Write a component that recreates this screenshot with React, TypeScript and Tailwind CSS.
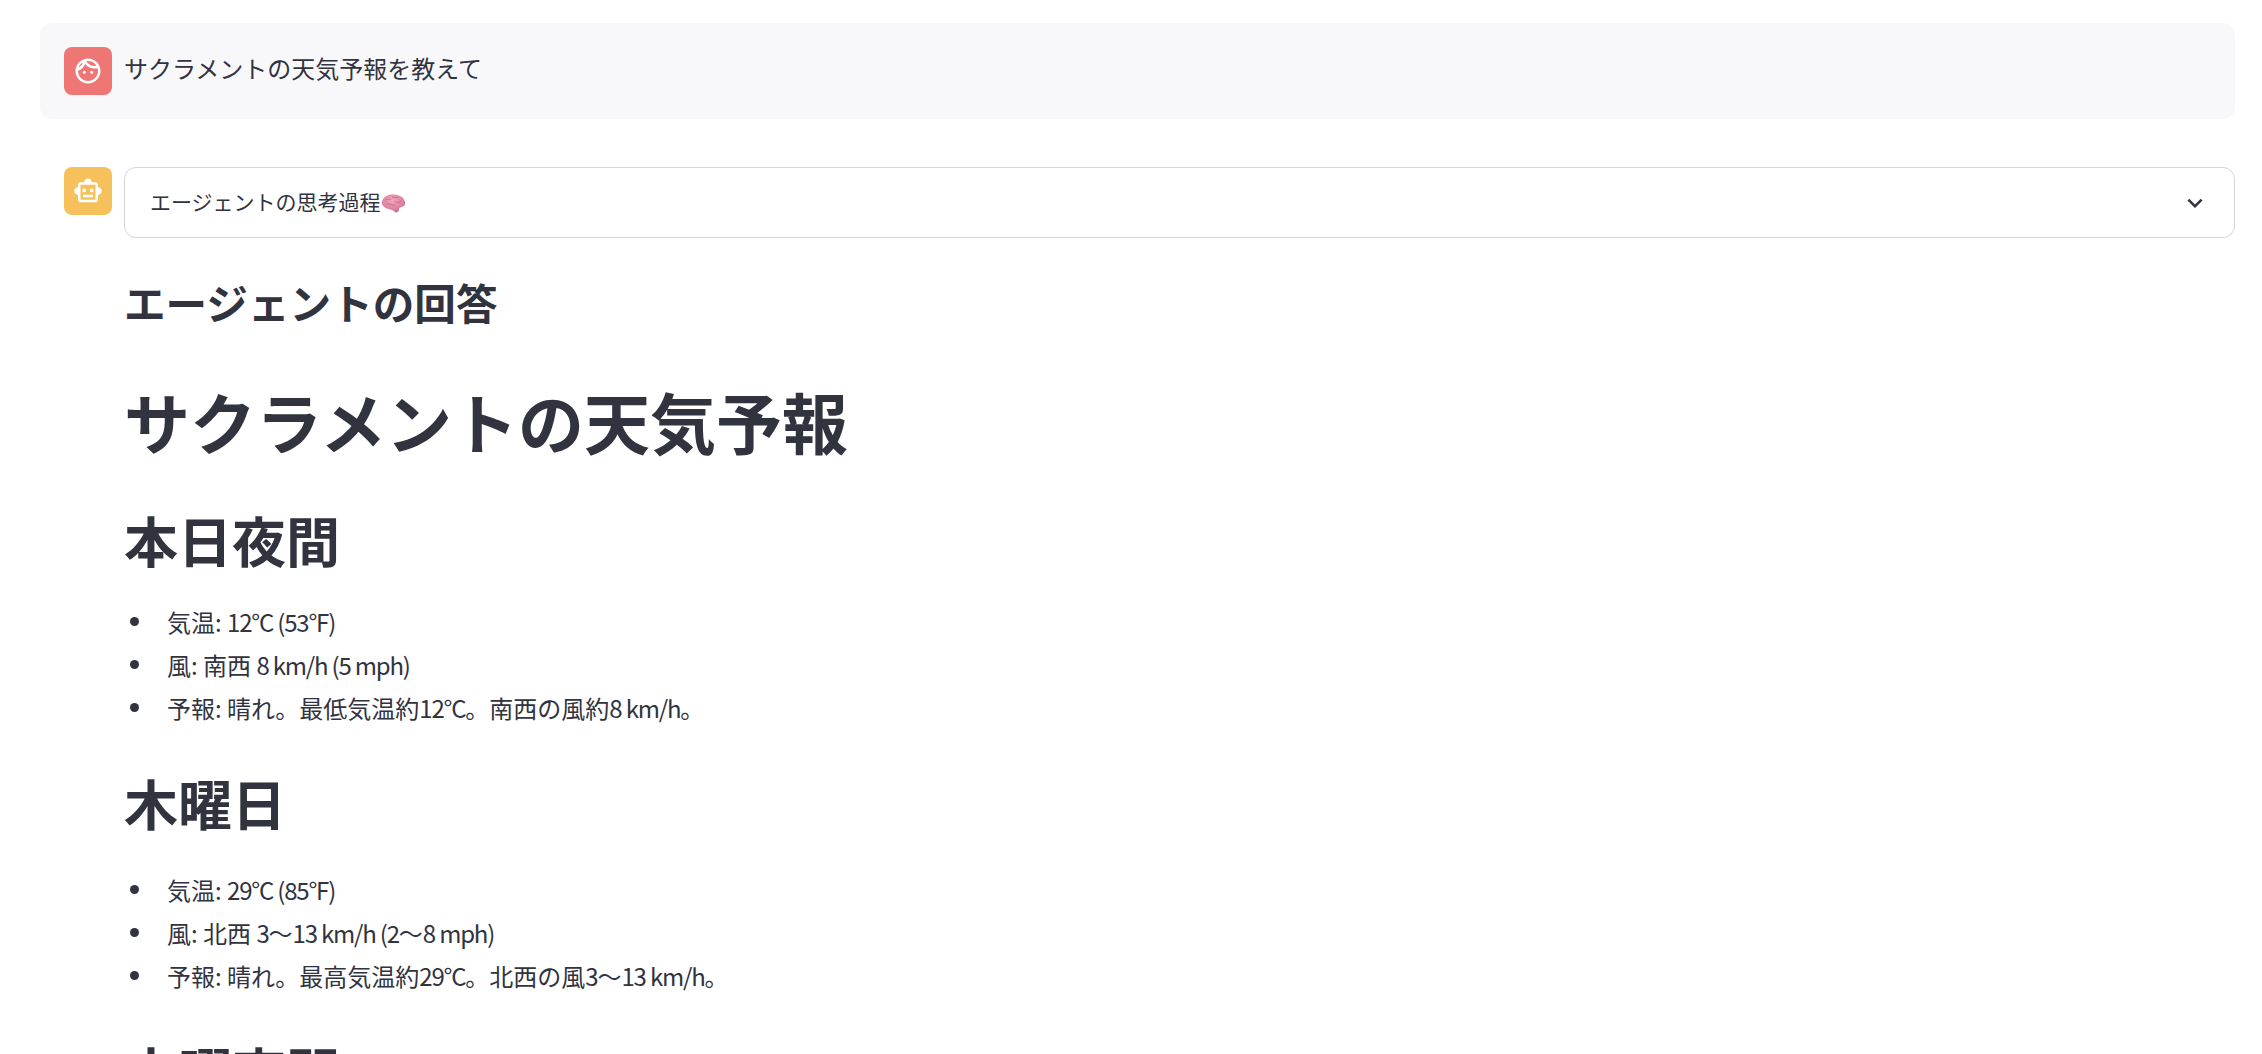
import { MdOutlineFace, MdOutlineSmartToy, MdKeyboardArrowDown } from "react-icons/md";

const items = [
  {
    title: "本日夜間",
    listClass: "mt-[23px] mb-[36px] list-none pl-[6px]",
    lines: ["気温: 12°C (53°F)", "風: 南西 8 km/h (5 mph)", "予報: 晴れ。最低気温約12°C。南西の風約8 km/h。"],
  },
  {
    title: "木曜日",
    listClass: "mt-[27px] mb-[36px] list-none pl-[6px]",
    lines: ["気温: 29°C (85°F)", "風: 北西 3〜13 km/h (2〜8 mph)", "予報: 晴れ。最高気温約29°C。北西の風3〜13 km/h。"],
  },
];

// latin runs are set narrower than the japanese around them
function Line({ text }: { text: string }) {
  const parts = text.split(/([0-9A-Za-z°()/][0-9A-Za-z°()/ ]*)/);
  return (
    <span>
      {parts.map((part, i) =>
        i % 2 === 1 ? (
          <span key={i} className="tracking-[-1.2px]">{part}</span>
        ) : (
          <span key={i}>{part}</span>
        ),
      )}
    </span>
  );
}

function Brain() {
  return (
    <svg width="25" height="21" viewBox="0 0 25 21" className="inline-block align-[-4px]">
      <defs>
        <radialGradient id="brain" cx="45%" cy="35%" r="70%">
          <stop offset="0%" stopColor="#f0a9bc" />
          <stop offset="70%" stopColor="#dd7f9b" />
          <stop offset="100%" stopColor="#b95f80" />
        </radialGradient>
      </defs>
      <path d="M1 11C0 6 5 2 10 1.500C16 1 23 3 24 9C25 12 22 14 19 14.500C18 15 18 16 18 17C17 20 14 20 13 18C10 16 3 16 1 11Z" fill="url(#brain)" />
      <path d="M5 7C7 5 8 8 10 6M11 4C13 6 15 3 17 5M13 9C15 8 17 11 20 8M6 11C9 10 11 13 14 12" stroke="#bf6585" strokeWidth="0.8" fill="none" />
    </svg>
  );
}

export default function App() {
  return (
    <div className="h-[1054px] overflow-hidden bg-white pt-[23px] pl-10 pr-[27px] text-[#31333f] font-['Noto_Sans_CJK_JP','Noto_Sans',sans-serif]">
      {/* user message */}
      <div className="flex h-24 gap-3 rounded-xl bg-[#f8f8fa] p-6">
        <div className="flex h-12 w-12 shrink-0 items-center justify-center rounded-lg bg-[#ee7674]">
          <MdOutlineFace className="text-white" size={30} />
        </div>
        <p className="text-2xl leading-[42px]">サクラメントの天気予報を教えて</p>
      </div>

      {/* assistant message */}
      <div className="mt-12 flex gap-3 pl-6">
        <div className="flex h-12 w-12 shrink-0 items-center justify-center rounded-lg bg-[#f6c15b]">
          <MdOutlineSmartToy className="text-white" size={30} />
        </div>
        <div className="min-w-0 flex-1">
          <div className="flex h-[71px] items-center justify-between rounded-xl border border-[#d6d6d8] pl-[25px] pr-[24px]">
            <span className="-mt-[2px] text-[21px]">エージェントの思考過程<Brain /></span>
            <MdKeyboardArrowDown size={30} />
          </div>

          <h3 className="mt-[35px] text-[41.600px] leading-[1.4] font-bold">エージェントの回答</h3>
          <h1 className="mt-[43px] text-[66px] leading-[1.4] font-bold">サクラメントの天気予報</h1>
          {items.map((day) => (
            <section key={day.title} className="mt-[35px]">
              <h2 className="text-[54px] leading-[1.4] font-bold">{day.title}</h2>
              <ul className={day.listClass}>
                {day.lines.map((line) => (
                  <li key={line} className="flex items-center gap-[28px] text-2xl leading-[43px]">
                    <span className="h-[9px] w-[9px] shrink-0 rounded-full bg-[#31333f]" />
                    <Line text={line} />
                  </li>
                ))}
              </ul>
            </section>
          ))}
          <h2 className="mt-[36px] text-[54px] leading-[1.4] font-bold">木曜夜間</h2>
        </div>
      </div>
    </div>
  );
}
